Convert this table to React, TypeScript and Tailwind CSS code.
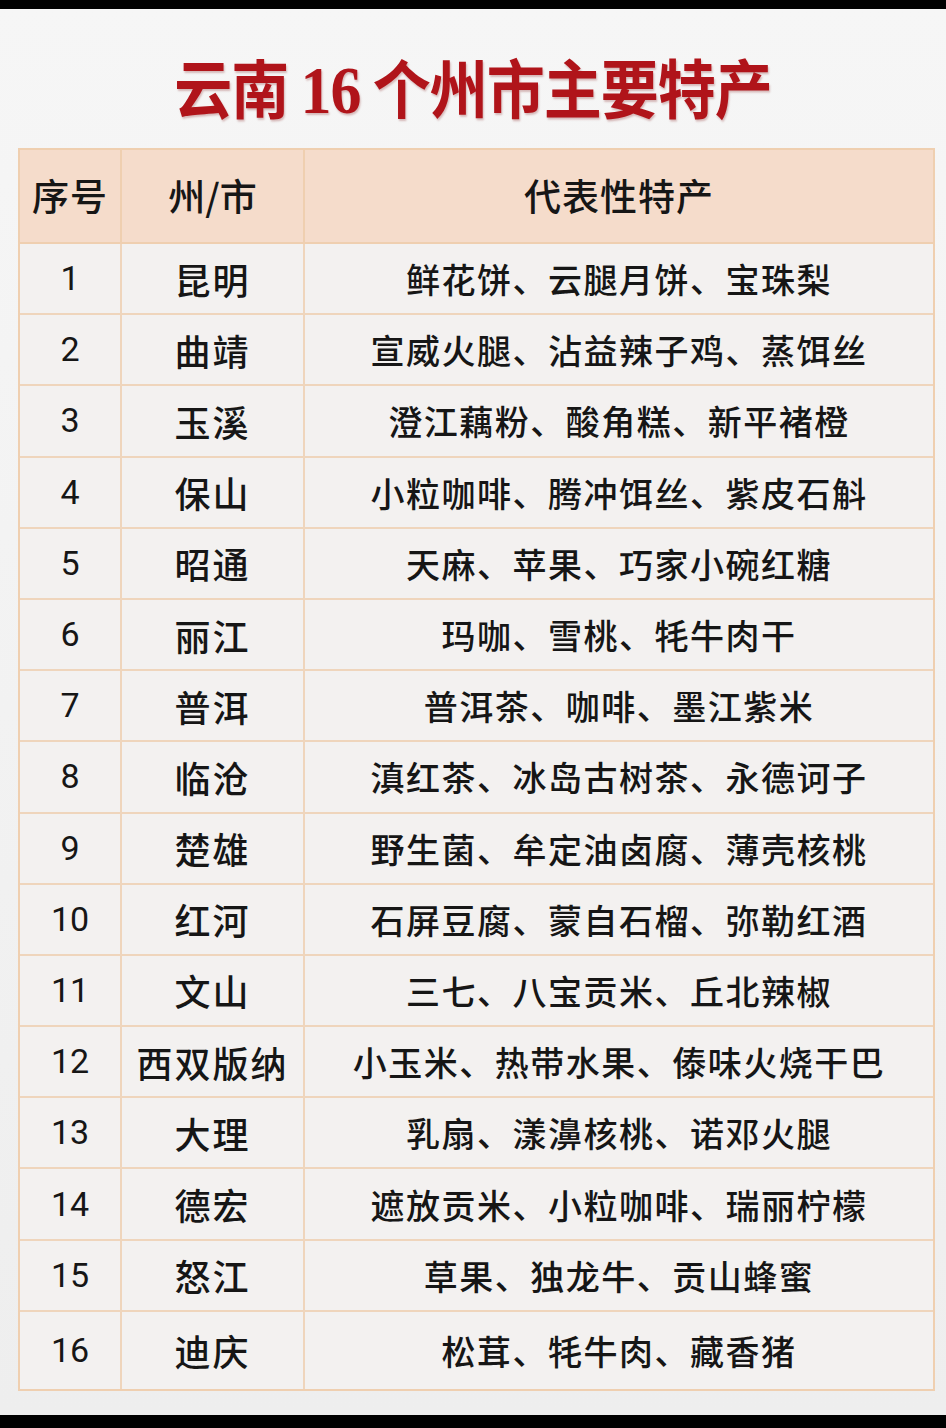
const rows: [string, string, string][] = [
  ["1", "昆明", "鲜花饼、云腿月饼、宝珠梨"],
  ["2", "曲靖", "宣威火腿、沾益辣子鸡、蒸饵丝"],
  ["3", "玉溪", "澄江藕粉、酸角糕、新平褚橙"],
  ["4", "保山", "小粒咖啡、腾冲饵丝、紫皮石斛"],
  ["5", "昭通", "天麻、苹果、巧家小碗红糖"],
  ["6", "丽江", "玛咖、雪桃、牦牛肉干"],
  ["7", "普洱", "普洱茶、咖啡、墨江紫米"],
  ["8", "临沧", "滇红茶、冰岛古树茶、永德诃子"],
  ["9", "楚雄", "野生菌、牟定油卤腐、薄壳核桃"],
  ["10", "红河", "石屏豆腐、蒙自石榴、弥勒红酒"],
  ["11", "文山", "三七、八宝贡米、丘北辣椒"],
  ["12", "西双版纳", "小玉米、热带水果、傣味火烧干巴"],
  ["13", "大理", "乳扇、漾濞核桃、诺邓火腿"],
  ["14", "德宏", "遮放贡米、小粒咖啡、瑞丽柠檬"],
  ["15", "怒江", "草果、独龙牛、贡山蜂蜜"],
  ["16", "迪庆", "松茸、牦牛肉、藏香猪"],
];

const cjk = { fontFamily: '"Noto Sans CJK SC", "Noto Sans", sans-serif' };
const num = { fontFamily: 'Roboto, "Liberation Sans", sans-serif' };

export default function App() {
  return (
    <div className="w-[946px] h-[1428px] bg-black flex flex-col">
      <div className="h-[9px] shrink-0" />
      <div className="flex-1 bg-gradient-to-b from-[#f6f6f6] to-[#eeeeee] flex flex-col">
        <div className="h-[139px] flex items-center justify-center pt-[20px]">
          <h1
            className="text-[58px] font-bold text-[#b0141a] leading-none scale-y-110 tracking-[-1px] [text-shadow:1px_2px_2px_rgba(120,0,0,0.25)]"
            style={cjk}
          >
            云南 <span style={{ fontFamily: '"Liberation Serif", serif' }} className="font-bold text-[62px]">16</span> 个州市主要特产
          </h1>
        </div>
        <div className="ml-[18px] w-[917px] border-2 border-[#efcfb0] text-[#161616]" style={cjk}>
          <div className="grid grid-cols-[102px_183px_1fr] h-[94px] bg-[#f5dccb] border-b-2 border-[#efcfb0]">
            <div className="flex items-center justify-center border-r-2 border-[#efcfb0] text-[37px] font-medium tracking-[1px]">序号</div>
            <div className="flex items-center justify-center border-r-2 border-[#efcfb0] text-[37px] font-medium">州/市</div>
            <div className="flex items-center justify-center text-[37px] font-medium tracking-[1px]">代表性特产</div>
          </div>
          {rows.map(([n, city, items], i) => (
            <div
              key={n}
              className={
                i === rows.length - 1
                  ? "grid grid-cols-[102px_183px_1fr] h-[77px] bg-[#f3f1f0]"
                  : "grid grid-cols-[102px_183px_1fr] h-[71.2px] bg-[#f3f1f0] border-b-2 border-[#efd5bc]"
              }
            >
              <div className="flex items-center justify-center border-r-2 border-[#efd5bc] text-[34px]" style={num}>
                {n}
              </div>
              <div className="flex items-center justify-center border-r-2 border-[#efd5bc] text-[36px] font-medium tracking-[2px]">
                {city}
              </div>
              <div className="flex items-center justify-center text-[34px] font-medium tracking-[1.5px]">{items}</div>
            </div>
          ))}
        </div>
        <div className="flex-1" />
      </div>
      <div className="h-[13px] shrink-0" />
    </div>
  );
}
